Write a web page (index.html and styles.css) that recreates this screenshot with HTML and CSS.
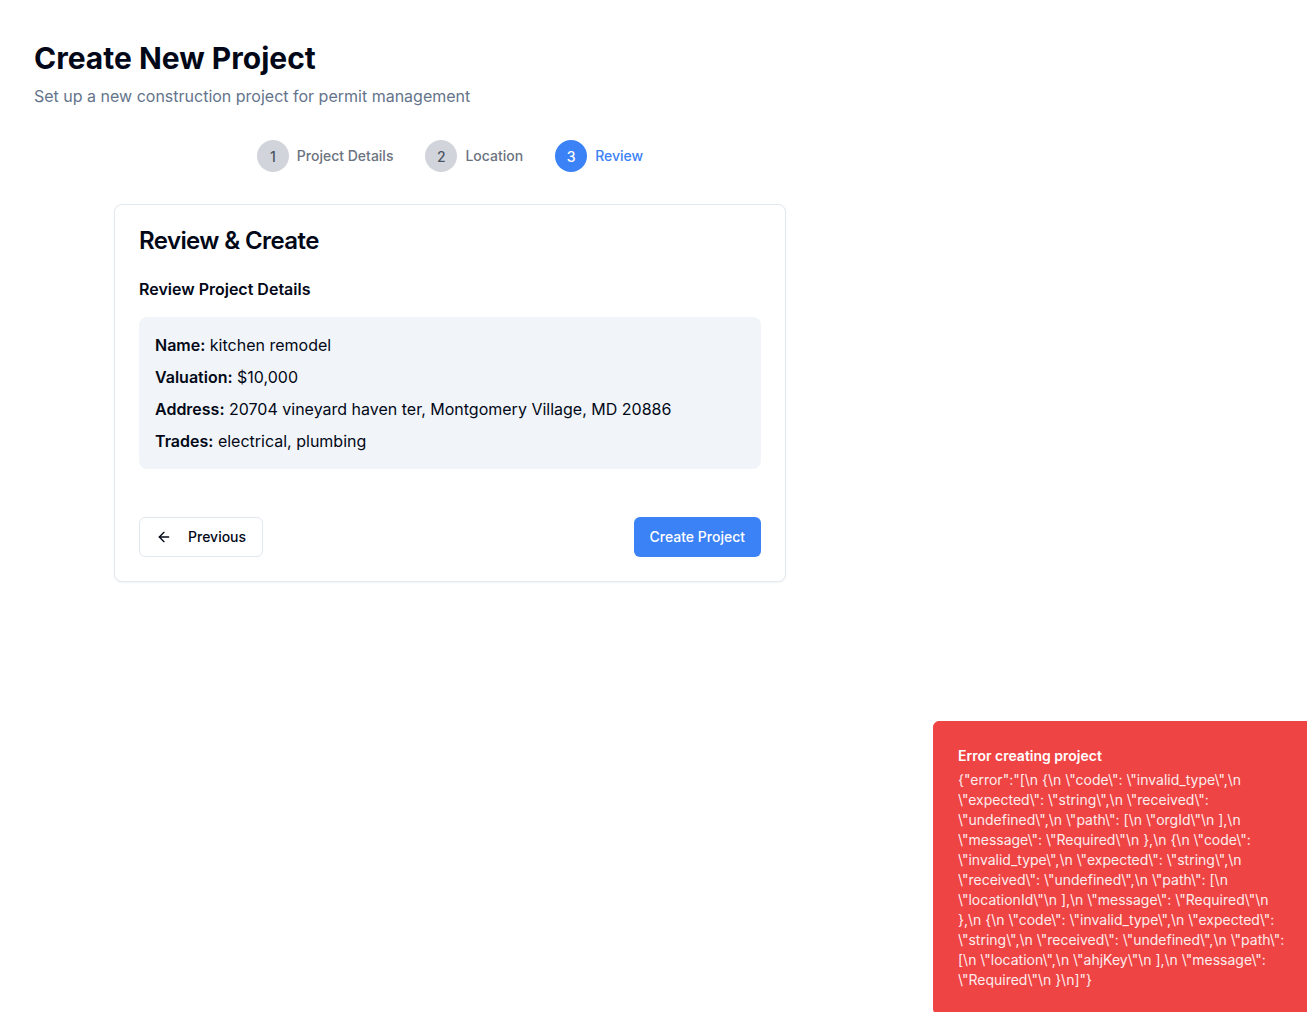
FILE: index.html
```html
<!DOCTYPE html>
<html lang="en">
<head>
<meta charset="utf-8">
<title>Create New Project</title>
<link rel="stylesheet" href="styles.css">
</head>
<body>
<main class="page">
  <div class="wrap">
    <h1 class="title">Create New Project</h1>
    <p class="subtitle">Set up a new construction project for permit management</p>

    <ol class="stepper">
      <li class="step"><span class="dot">1</span><span class="label">Project Details</span></li>
      <li class="step"><span class="dot">2</span><span class="label">Location</span></li>
      <li class="step active"><span class="dot">3</span><span class="label">Review</span></li>
    </ol>

    <section class="card">
      <h2 class="card-title">Review &amp; Create</h2>
      <h3 class="section-title">Review Project Details</h3>
      <div class="details">
        <p><strong>Name:</strong> kitchen remodel</p>
        <p><strong>Valuation:</strong> $10,000</p>
        <p><strong>Address:</strong> 20704 vineyard haven ter, Montgomery Village, MD 20886</p>
        <p><strong>Trades:</strong> electrical, plumbing</p>
      </div>
      <div class="actions">
        <button class="btn btn-outline" type="button">
          <svg width="16" height="16" viewBox="0 0 24 24" fill="none" stroke="currentColor" stroke-width="2" stroke-linecap="round" stroke-linejoin="round"><path d="m12 19-7-7 7-7"/><path d="M19 12H5"/></svg>
          <span>Previous</span>
        </button>
        <button class="btn btn-primary" type="button">Create Project</button>
      </div>
    </section>
  </div>
</main>

<div class="toast" role="alert">
  <div class="toast-title">Error creating project</div>
  <div class="toast-desc">{"error":"[\n {\n \"code\": \"invalid_type\",\n \"expected\": \"string\",\n \"received\": \"undefined\",\n \"path\": [\n \"orgId\"\n ],\n \"message\": \"Required\"\n },\n {\n \"code\": \"invalid_type\",\n \"expected\": \"string\",\n \"received\": \"undefined\",\n \"path\": [\n \"locationId\"\n ],\n \"message\": \"Required\"\n },\n {\n \"code\": \"invalid_type\",\n \"expected\": \"string\",\n \"received\": \"undefined\",\n \"path\": [\n \"location\",\n \"ahjKey\"\n ],\n \"message\": \"Required\"\n }\n]"}</div>
</div>
</body>
</html>
```

FILE: styles.css
```css
* { box-sizing: border-box; }
html, body { margin: 0; padding: 0; overflow: hidden; height: 100%; }
body {
  font-family: Inter, "Noto Sans", "Liberation Sans", sans-serif;
  color: #0f172a;
  background: #ffffff;
}
.page { padding: 40px 34px; }
.wrap { width: 832px; }
.title {
  margin: 0;
  font-size: 30px;
  line-height: 36px;
  font-weight: 700;
  color: #020817;
}
.subtitle {
  margin: 8px 0 0;
  font-size: 16px;
  line-height: 24px;
  color: #64748b;
}
.stepper {
  list-style: none;
  margin: 32px 0 0;
  padding: 0;
  display: flex;
  justify-content: center;
  gap: 32px;
}
.step { display: flex; align-items: center; gap: 8px; }
.dot {
  width: 32px; height: 32px;
  border-radius: 50%;
  background: #d1d5db;
  color: #4b5563;
  display: flex; align-items: center; justify-content: center;
  font-size: 14px; font-weight: 500;
}
.label { font-size: 14px; font-weight: 500; color: #6b7280; line-height: 20px; }
.step.active .dot { background: #3b82f6; color: #ffffff; }
.step.active .label { color: #3b82f6; }

.card {
  max-width: 672px;
  margin: 32px auto 0;
  border: 1px solid #e2e8f0;
  border-radius: 8px;
  background: #fff;
  box-shadow: 0 1px 2px rgba(0,0,0,0.05);
  padding: 24px;
}
.card-title {
  margin: 0;
  font-size: 24px;
  line-height: 24px;
  font-weight: 600;
  letter-spacing: -0.6px;
  color: #020817;
}
.section-title {
  margin: 24px 0 0;
  font-size: 16px;
  line-height: 24px;
  font-weight: 600;
  color: #020817;
}
.details {
  margin-top: 16px;
  background: #f1f5f9;
  border-radius: 8px;
  padding: 16px;
  display: flex;
  flex-direction: column;
  gap: 8px;
}
.details p { margin: 0; font-size: 16px; line-height: 24px; color: #020817; }
.details strong { font-weight: 600; }
.actions {
  margin-top: 48px;
  display: flex;
  justify-content: space-between;
}
.btn {
  height: 40px;
  border-radius: 6px;
  font-family: inherit;
  font-size: 14px;
  font-weight: 500;
  line-height: 20px;
  display: inline-flex;
  align-items: center;
  cursor: pointer;
}
.btn-outline {
  background: #fff;
  border: 1px solid #e2e8f0;
  color: #020817;
  padding: 0 16px;
  gap: 16px;
}
.btn-primary {
  background: #3b82f6;
  border: none;
  color: #fff;
  padding: 0 16px;
}

.toast {
  position: fixed;
  left: 933px;
  top: 721px;
  width: 390px;
  background: #ef4444;
  border: 1px solid #ef4444;
  color: #fff;
  border-radius: 6px;
  padding: 24px 32px 24px 24px;
}
.toast-title { font-size: 14px; line-height: 20px; font-weight: 600; }
.toast-desc { font-size: 14px; line-height: 20px; opacity: 0.9; margin-top: 4px; font-weight: 400; overflow-wrap: break-word; }
```
